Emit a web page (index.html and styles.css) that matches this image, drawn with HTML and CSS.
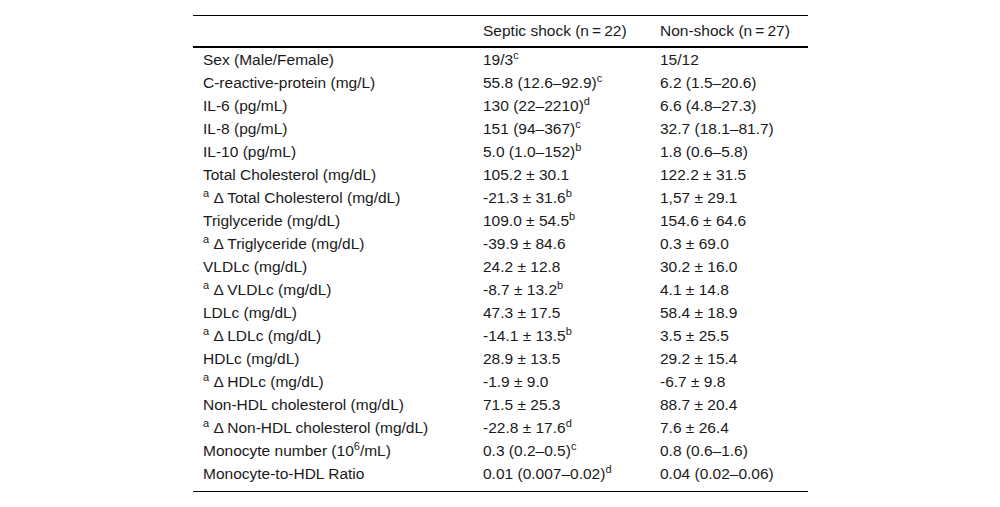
FILE: index.html
```html
<!DOCTYPE html>
<html>
<head>
<meta charset="utf-8">
<link rel="stylesheet" href="styles.css">
</head>
<body>
<div class="page">
<table class="data">
<thead>
<tr><th class="c1"></th><th class="c2">Septic shock (n&#8201;=&#8201;22)</th><th class="c3">Non-shock (n&#8201;=&#8201;27)</th></tr>
</thead>
<tbody>
<tr><td>Sex (Male/Female)</td><td>19/3<sup>c</sup></td><td>15/12</td></tr>
<tr><td>C-reactive-protein (mg/L)</td><td>55.8 (12.6–92.9)<sup>c</sup></td><td>6.2 (1.5–20.6)</td></tr>
<tr><td>IL-6 (pg/mL)</td><td>130 (22–2210)<sup>d</sup></td><td>6.6 (4.8–27.3)</td></tr>
<tr><td>IL-8 (pg/mL)</td><td>151 (94–367)<sup>c</sup></td><td>32.7 (18.1–81.7)</td></tr>
<tr><td>IL-10 (pg/mL)</td><td>5.0 (1.0–152)<sup>b</sup></td><td>1.8 (0.6–5.8)</td></tr>
<tr><td>Total Cholesterol (mg/dL)</td><td>105.2 ± 30.1</td><td>122.2 ± 31.5</td></tr>
<tr><td><sup>a</sup> Δ Total Cholesterol (mg/dL)</td><td>-21.3 ± 31.6<sup>b</sup></td><td>1,57 ± 29.1</td></tr>
<tr><td>Triglyceride (mg/dL)</td><td>109.0 ± 54.5<sup>b</sup></td><td>154.6 ± 64.6</td></tr>
<tr><td><sup>a</sup> Δ Triglyceride (mg/dL)</td><td>-39.9 ± 84.6</td><td>0.3 ± 69.0</td></tr>
<tr><td>VLDLc (mg/dL)</td><td>24.2 ± 12.8</td><td>30.2 ± 16.0</td></tr>
<tr><td><sup>a</sup> Δ VLDLc (mg/dL)</td><td>-8.7 ± 13.2<sup>b</sup></td><td>4.1 ± 14.8</td></tr>
<tr><td>LDLc (mg/dL)</td><td>47.3 ± 17.5</td><td>58.4 ± 18.9</td></tr>
<tr><td><sup>a</sup> Δ LDLc (mg/dL)</td><td>-14.1 ± 13.5<sup>b</sup></td><td>3.5 ± 25.5</td></tr>
<tr><td>HDLc (mg/dL)</td><td>28.9 ± 13.5</td><td>29.2 ± 15.4</td></tr>
<tr><td><sup>a</sup> Δ HDLc (mg/dL)</td><td>-1.9 ± 9.0</td><td>-6.7 ± 9.8</td></tr>
<tr><td>Non-HDL cholesterol (mg/dL)</td><td>71.5 ± 25.3</td><td>88.7 ± 20.4</td></tr>
<tr><td><sup>a</sup> Δ Non-HDL cholesterol (mg/dL)</td><td>-22.8 ± 17.6<sup>d</sup></td><td>7.6 ± 26.4</td></tr>
<tr><td>Monocyte number (10<sup>6</sup>/mL)</td><td>0.3 (0.2–0.5)<sup>c</sup></td><td>0.8 (0.6–1.6)</td></tr>
<tr class="last"><td>Monocyte-to-HDL Ratio</td><td>0.01 (0.007–0.02)<sup>d</sup></td><td>0.04 (0.02–0.06)</td></tr>
</tbody>
</table>
</div>
</body>
</html>
```
FILE: styles.css
```css
html, body {
  margin: 0;
  padding: 0;
  background: #fff;
}
.page {
  display: flex;
  justify-content: center;
  padding-top: 15px;
  padding-left: 1px;
}
.data {
  border-collapse: collapse;
  font-family: "Liberation Sans", Arial, sans-serif;
  font-size: 15.5px;
  color: #1a1a1a;
  border-top: 1px solid #000;
  border-bottom: 1px solid #000;
  width: 615px;
  table-layout: fixed;
}
.data th,
.data td {
  box-sizing: border-box;
}
.c1 { width: 280px; }
.c2 { width: 177px; }
.c3 { width: 158px; }
.data th {
  font-weight: normal;
  text-align: left;
  padding: 0 10px;
  height: 31px;
  line-height: 18px;
  border-bottom: 2px solid #000;
  vertical-align: middle;
}
.data td {
  text-align: left;
  padding: 1px 10px;
  line-height: 21px;
  white-space: nowrap;
  vertical-align: middle;
}
.data tr.last td {
  padding-bottom: 7px;
}
sup {
  font-size: 11px;
  line-height: 0;
  vertical-align: 6px;
}
```
